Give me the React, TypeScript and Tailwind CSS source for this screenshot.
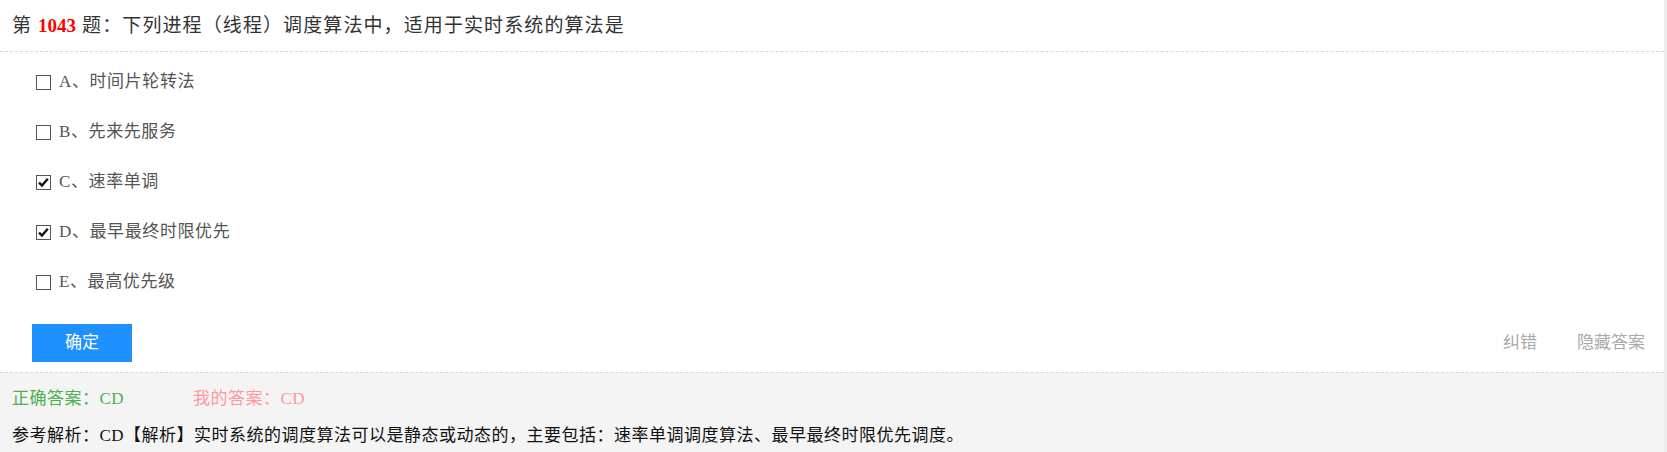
import { useState } from "react"

const options = [
  { key: "A", text: "时间片轮转法", checked: false },
  { key: "B", text: "先来先服务", checked: false },
  { key: "C", text: "速率单调", checked: true },
  { key: "D", text: "最早最终时限优先", checked: true },
  { key: "E", text: "最高优先级", checked: false },
]

const font = { fontFamily: '"Liberation Serif", "Noto Sans CJK SC", serif' }

function CheckBox({ checked }: { checked: boolean }) {
  return (
    <span className="relative inline-block w-[15px] h-[15px] border border-[#555] bg-white shrink-0">
      {checked && (
        <svg viewBox="0 0 15 15" className="absolute -left-px -top-px w-[15px] h-[15px]">
          <path d="M3 7.6 L6 10.6 L11.8 3.8" fill="none" stroke="#111" strokeWidth="2.4" />
        </svg>
      )}
    </span>
  )
}

export default function App() {
  const [checked, setChecked] = useState(options.map((o) => o.checked))

  return (
    <div className="w-[1667px] h-[452px] bg-white border-r-[3px] border-[#ececec] overflow-hidden" style={font}>
      <div className="h-[52px] flex items-center pl-3 pt-[2px] border-b border-dashed border-[#d8d8d8] text-[19px] text-[#333] tracking-[1.1px]">
        <span>第</span>
        <span className="mx-[6px] font-bold text-[#ff0000] tracking-normal">1043</span>
        <span>题：下列进程（线程）调度算法中，适用于实时系统的算法是</span>
      </div>

      <div className="pt-[5px]">
        {options.map((o, i) => (
          <label
            key={o.key}
            className="h-[50px] flex items-center pl-[36px] text-[17px] text-[#555] tracking-[0.6px] cursor-pointer"
            onClick={() => setChecked(checked.map((c, j) => (j === i ? !c : c)))}
          >
            <CheckBox checked={checked[i]} />
            <span className="ml-[8px]">
              {o.key}、{o.text}
            </span>
          </label>
        ))}
      </div>

      <div className="mt-[17px] mb-[10px] flex items-center justify-between pl-[32px] pr-[19px]">
        <button className="w-[100px] h-[38px] bg-[#1e90ff] text-white text-[17px]">确定</button>
        <div className="flex gap-[40px] text-[17px] text-[#aaa]">
          <span>纠错</span>
          <span>隐藏答案</span>
        </div>
      </div>

      <div className="h-[80px] bg-[#f4f4f4] border-t border-dashed border-[#d8d8d8] pl-3 pt-[13px] text-[17px] tracking-[0.5px]">
        <div className="flex leading-[26px]">
          <span className="w-[181px] text-[#4caf50]">正确答案：CD</span>
          <span className="text-[#ff9999]">我的答案：CD</span>
        </div>
        <div className="mt-[11px] leading-[26px] text-[#111]">
          参考解析：CD【解析】实时系统的调度算法可以是静态或动态的，主要包括：速率单调调度算法、最早最终时限优先调度。
        </div>
      </div>
    </div>
  )
}
